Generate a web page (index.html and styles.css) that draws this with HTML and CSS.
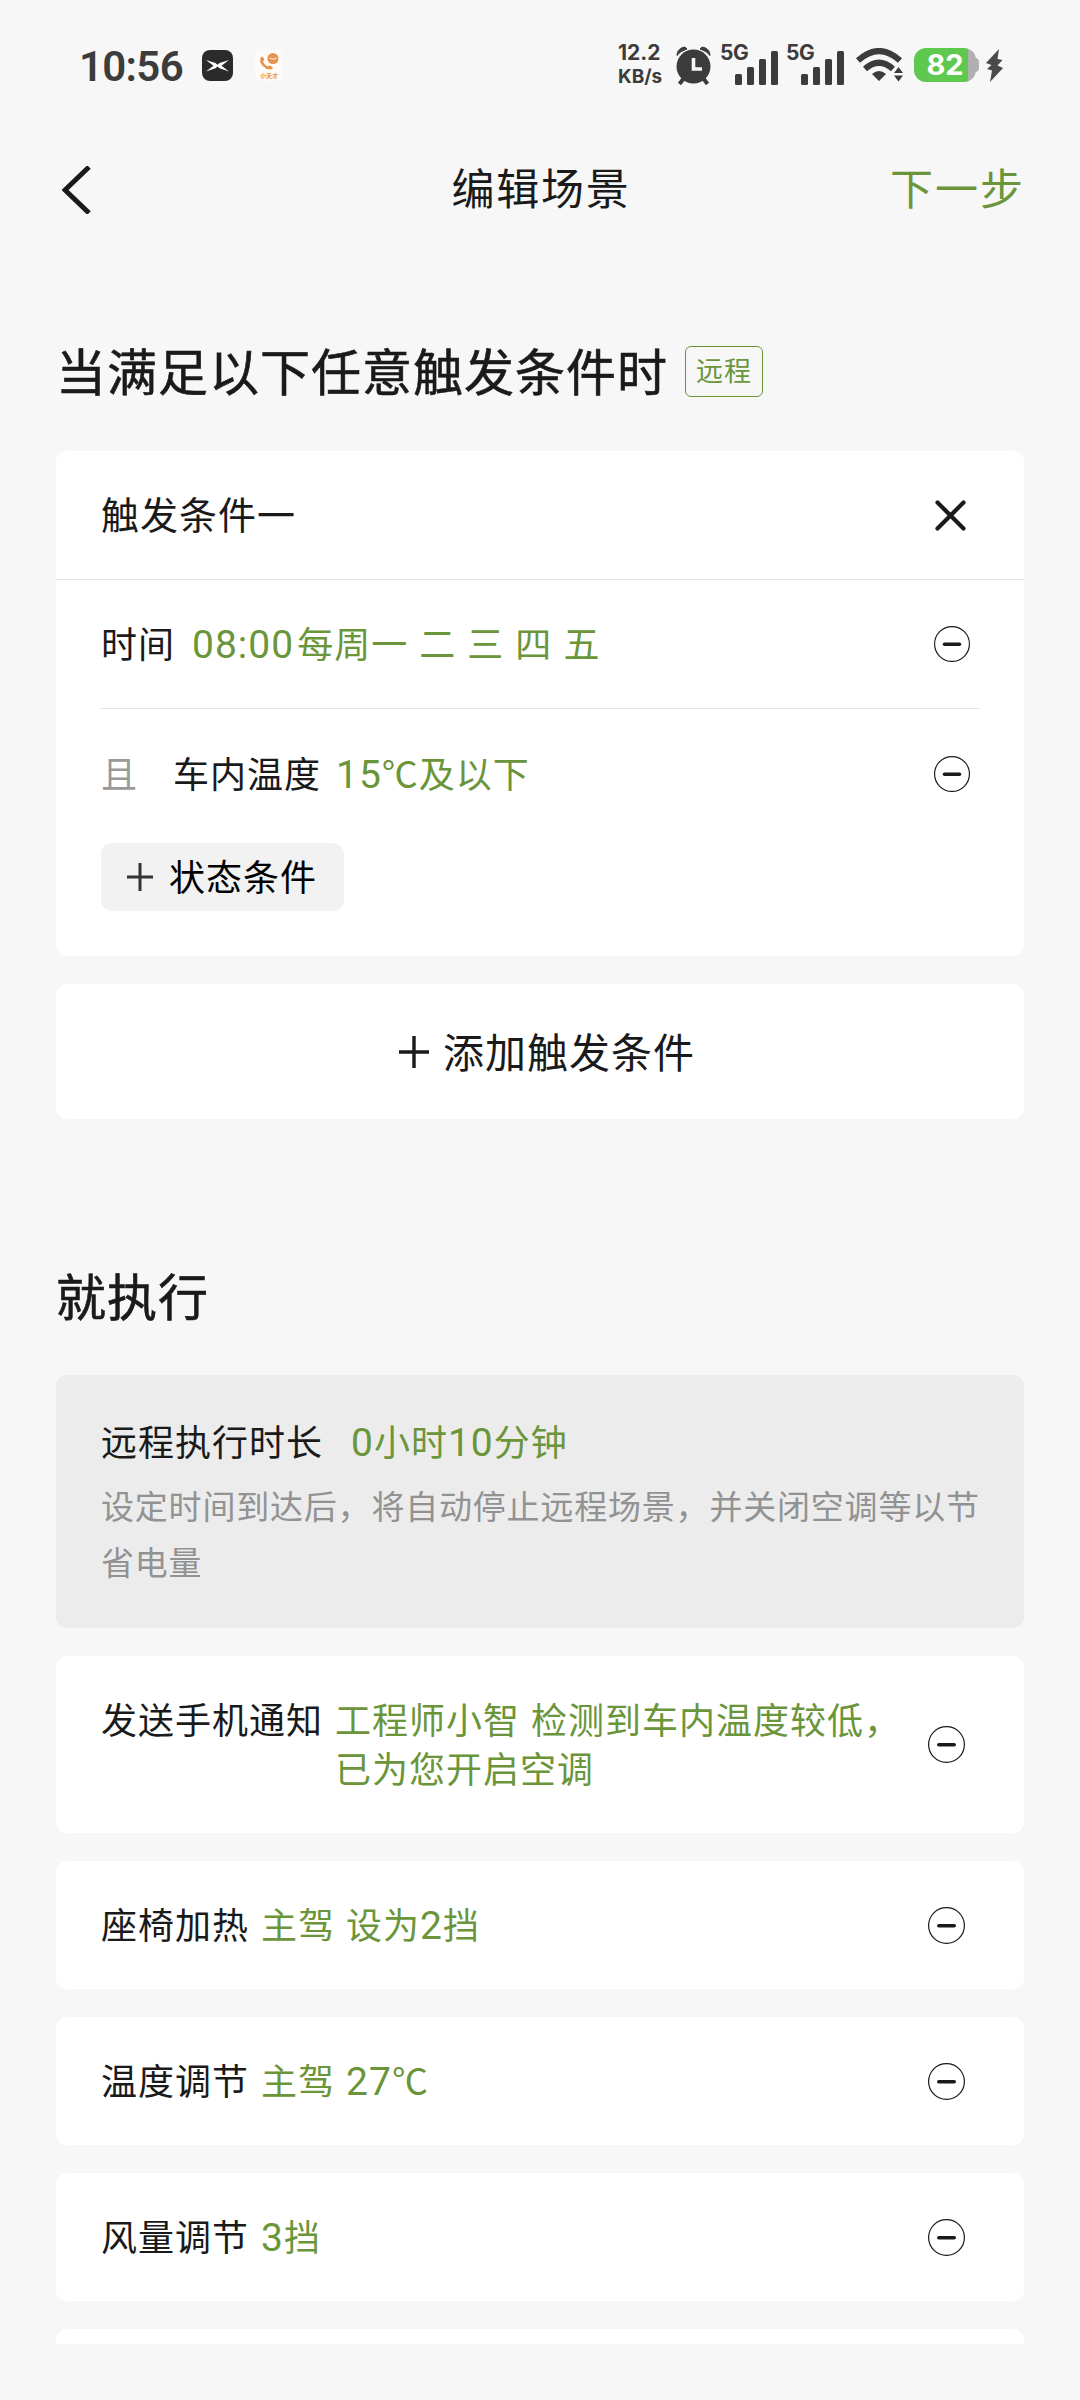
FILE: index.html
```html
<!DOCTYPE html>
<html lang="zh-CN">
    <head>
        <meta charset="utf-8">
        <meta name="viewport" content="width=device-width, initial-scale=1">
        <title>编辑场景</title>
        <link rel="stylesheet" href="styles.css">
    </head>
    <body>
        <!-- shared icons -->
        <svg class="sprite">
            <symbol id="minus" viewBox="0 0 37 37">
                <circle cx="18.5" cy="18.5" r="17.9" fill="none" stroke="#1a1a1a" stroke-width="1.2"/>
                <path d="M10.8 18.7h15.4" stroke="#1a1a1a" stroke-width="3.6" stroke-linecap="round"/>
            </symbol>
            <symbol id="signal" viewBox="0 0 43 34">
                <rect x="0" y="23" width="7" height="11" rx="1.5"/>
                <rect x="12" y="16" width="7" height="18" rx="1.5"/>
                <rect x="24" y="8" width="7" height="26" rx="1.5"/>
                <rect x="36" y="0" width="7" height="34" rx="1.5"/>
            </symbol>
        </svg>

        <div class="statusbar">
            <span class="time">10:56</span>
            <svg class="app-dark" width="31" height="31" viewBox="0 0 31 31">
                <rect width="31" height="31" rx="8" fill="#2b2b2b"/>
                <path d="M4 10L13.5 13L15.500 14.800L17.5 13L27 10L19.500 15.800L27 21.500L17.5 18.300L15.500 16.500L13.5 18.300L4 21.500L11.500 15.800Z" fill="#fff"/>
            </svg>
            <svg class="app-light" width="28" height="31" viewBox="0 0 28 31">
                <rect width="28" height="31" rx="7" fill="#fdfbf9"/>
                <circle cx="18" cy="8.500" r="5.500" fill="#e8924a"/>
                <path d="M14.500 8q3.500 2.500 7 0" stroke="#fdfbf9" stroke-width="1" fill="none"/>
                <path d="M6 7q-2.500 5 2 9q4 4.500 9 3q2-1-1-3q-2-1-3 .5q-4-1.500-5-5.500q2-1 .5-3q-1-2-2.500-1z" fill="#e8924a"/>
                <text class="app-text" x="14" y="27.500" text-anchor="middle">小天才</text>
            </svg>

            <div class="speed"><span>12.2</span><span class="unit">KB/s</span></div>
            <svg class="alarm" width="35" height="39" viewBox="0 0 35 39" fill="#3c3c3c">
                <path d="M1 8.500Q2 2 9 1L11 3Q4 5 1 9.500zM34 8.500Q33 2 26 1L24 3Q31 5 34 9.500z" stroke="#3c3c3c"/>
                <path d="M8 32L3.500 38M27 32L31.500 38" stroke="#3c3c3c" stroke-width="4"/>
                <circle cx="17.500" cy="20.500" r="17"/>
                <path d="M17.500 12v11h8.500" fill="none" stroke="#f7f7f7" stroke-width="3.600"/>
            </svg>
            <div class="net"><span>5G</span><svg width="43" height="34"><use href="#signal"/></svg></div>
            <div class="net"><span>5G</span><svg width="43" height="34"><use href="#signal"/></svg></div>
            <svg class="wifi" width="48" height="34" viewBox="0 0 48 34">
                <g fill="none" stroke="#3c3c3c" stroke-width="6">
                    <path d="M2 12.500Q23 -6.500 44 12.500"/>
                    <path d="M9 21Q23 8.500 37 21"/>
                </g>
                <path d="M16 26q7-6 14 0l-7 7zM38 25l4.500-6l4.500 6zM38 27.500h9l-4.500 6z" fill="#3c3c3c"/>
            </svg>
            <div class="battery">82</div>
            <svg class="bolt" width="17" height="33" viewBox="0 0 17 33">
                <path d="M13 0L0 14L5.500 16L1 20L6 21.500L4 33L17 19L11.500 16.500L16.500 11L11.500 10Z" fill="#4a4a4a"/>
            </svg>
        </div>

        <header>
            <svg class="back" width="30" height="48" viewBox="0 0 30 48">
                <path d="M27 1L3 24L27 47" fill="none" stroke="#1a1a1a" stroke-width="5"/>
            </svg>
            <h1>编辑场景</h1>
            <a class="next">下一步</a>
        </header>

        <main>
            <h2>当满足以下任意触发条件时<span class="tag">远程</span></h2>

            <section class="card trigger">
                <div class="trigger-head">
                    <h3>触发条件一</h3>
                    <svg width="31" height="31" viewBox="0 0 31 31">
                        <path d="M2.500 2.500L28.500 28.500M28.500 2.500L2.500 28.500" stroke="#1a1a1a" stroke-width="4.200" stroke-linecap="round"/>
                    </svg>
                </div>
                <div class="cond line">
                    <span>时间</span>
                    <span class="value week"><span class="num">08:00</span>每周一 二 三 四 五</span>
                    <svg class="remove"><use href="#minus"/></svg>
                </div>
                <div class="cond">
                    <span class="and">且</span>
                    <span>车内温度</span>
                    <span class="value temp"><span class="num">15</span>℃及以下</span>
                    <svg class="remove"><use href="#minus"/></svg>
                </div>
                <button class="state-btn">
                    <svg width="26" height="28" viewBox="0 0 26 28"><path d="M0 14h26M13 0v28" stroke="#333" stroke-width="3"/></svg>
                    <span>状态条件</span>
                </button>
            </section>

            <button class="card add-btn">
                <svg width="30" height="32" viewBox="0 0 30 32"><path d="M0 16h30M15 0v32" stroke="#1a1a1a" stroke-width="3.400"/></svg>
                <span>添加触发条件</span>
            </button>

            <h2 class="do">就执行</h2>

            <div class="duration">
                <p class="dur-title">远程执行时长<span class="value"><span class="num">0</span>小时<span class="num">10</span>分钟</span></p>
                <p class="dur-desc">设定时间到达后，将自动停止远程场景，并关闭空调等以节省电量</p>
            </div>

            <div class="card action notify">
                <span>发送手机通知</span>
                <span class="value">工程师小智 检测到车内温度较低，<br>已为您开启空调</span>
                <svg class="remove"><use href="#minus"/></svg>
            </div>
            <div class="card action">
                <span>座椅加热</span>
                <span class="value">主驾 设为<span class="num">2</span>挡</span>
                <svg class="remove"><use href="#minus"/></svg>
            </div>
            <div class="card action">
                <span>温度调节</span>
                <span class="value">主驾 <span class="num">27</span>℃</span>
                <svg class="remove"><use href="#minus"/></svg>
            </div>
            <div class="card action">
                <span>风量调节</span>
                <span class="value"><span class="num">3</span>挡</span>
                <svg class="remove"><use href="#minus"/></svg>
            </div>
            <div class="card action"></div>
        </main>
    </body>
</html>
```

FILE: styles.css
```css
*{
    box-sizing: border-box;
    margin: 0;
    padding: 0;
}
body{
    width: 1080px;
    height: 2400px;
    overflow: hidden;
    background: #f7f7f7;
    color: #1a1a1a;
    font-family: "Noto Sans CJK SC", sans-serif;
    font-size: 36px;
    letter-spacing: 1px;
}
svg{
    display: block;
    flex-shrink: 0;
}
button{
    border: none;
    font: inherit;
    letter-spacing: inherit;
    color: inherit;
}
.sprite{
    display: none;
}

/* status bar */
.statusbar{
    display: flex;
    align-items: center;
    height: 130px;
    padding: 0 77px 0 79px;
    color: #3c3c3c;
    font-family: Inter, sans-serif;
    font-weight: 700;
    letter-spacing: 0;
}
.time{
    width: 123px;
    padding-top: 2px;
    font-family: Roboto, sans-serif;
    font-size: 42px;
    font-weight: 600;
    letter-spacing: -0.7px;
}
.app-dark{
    margin-right: 22px;
}
.app-text{
    font-family: "Noto Sans CJK SC", sans-serif;
    font-size: 6px;
    fill: #e8924a;
}
.speed{
    display: flex;
    flex-direction: column;
    width: 46px;
    margin-left: auto;
    margin-right: 12px;
    font-size: 21px;
    line-height: 24px;
}
.unit{
    font-size: 19px;
}
.alarm{
    margin-right: 9px;
}
.net{
    display: flex;
    width: 58px;
    height: 39px;
    margin-right: 8px;
    align-items: flex-end;
    font-size: 21px;
    fill: #3c3c3c;
}
.net span{
    width: 15px;
    align-self: flex-start;
    line-height: 14px;
    letter-spacing: -0.5px;
    white-space: nowrap;
}
.wifi{
    margin-left: 4px;
    margin-right: 10px;
}
.battery{
    position: relative;
    width: 62px;
    height: 34px;
    margin-right: 10px;
    border-radius: 12px;
    background: linear-gradient(to right, #5fc94f 54px, #b0b0b0 54px);
    color: #fff;
    font-size: 29px;
    line-height: 34px;
    text-align: center;
}
.battery::after{
    content: "";
    position: absolute;
    top: 10px;
    right: -3px;
    width: 5px;
    height: 14px;
    border-radius: 0 4px 4px 0;
    background: #b0b0b0;
}

/* header */
header{
    display: flex;
    align-items: center;
    justify-content: space-between;
    height: 120px;
    padding: 0 55px 0 62px;
}
h1{
    margin-left: 100px;
    padding-bottom: 9px;
    font-size: 43px;
    font-weight: 400;
    letter-spacing: 1.7px;
}
.next{
    padding-bottom: 9px;
    color: #6a953a;
    font-size: 43px;
    letter-spacing: 2px;
}

main{
    height: 2094px;
    padding: 70px 56px 0;
    overflow: hidden;
}
h2{
    display: flex;
    align-items: center;
    height: 104px;
    padding-bottom: 7px;
    font-size: 50px;
    font-weight: 400;
    -webkit-text-stroke: 0.6px #1a1a1a;
}
.tag{
    height: 51px;
    margin-top: 5px;
    margin-left: 17px;
    padding: 0 10px;
    border: 1px solid #6a953a;
    border-radius: 6px;
    color: #6a953a;
    font-size: 27px;
    line-height: 46px;
    -webkit-text-stroke: 0;
}
.card{
    border-radius: 11px;
    background: #fff;
}
.value{
    color: #6a953a;
}
.num{
    font-family: Roboto, sans-serif;
    font-size: 39px;
    line-height: 1;
}
.remove{
    width: 37px;
    height: 37px;
    margin-left: auto;
}

.trigger{
    height: 505px;
    margin-top: 27px;
}
.trigger-head{
    display: flex;
    align-items: center;
    justify-content: space-between;
    height: 129px;
    padding: 0 58px 0 45px;
    border-bottom: 1px solid #e6e6e6;
}
h3{
    padding-bottom: 6px;
    font-size: 38px;
    font-weight: 400;
}
.cond{
    display: flex;
    align-items: center;
    height: 129px;
    margin: 0 45px;
    padding: 0 9px 0 0;
}
.cond span,
.action > span{
    padding-bottom: 4px;
}
.cond .value{
    margin-left: 17px;
}
.cond .temp{
    margin-left: 15px;
}
.cond .num,
.action .num{
    padding-bottom: 0;
}
.line{
    border-bottom: 1px solid #e6e6e6;
}
.cond .remove{
    width: 36px;
    height: 36px;
}
.week{
    word-spacing: 2px;
}
.week .num{
    margin-right: 3px;
}
.and{
    width: 72px;
    color: #999;
}
.state-btn{
    display: flex;
    align-items: center;
    gap: 16px;
    width: 243px;
    height: 68px;
    margin: 5px 0 0 45px;
    padding: 0 0 0 26px;
    border-radius: 11px;
    background: #f2f2f2;
    color: #000;
}
.state-btn span,
.add-btn span{
    padding-bottom: 4px;
}
.add-btn{
    display: flex;
    align-items: center;
    justify-content: center;
    gap: 14px;
    width: 100%;
    height: 135px;
    margin-top: 28px;
    padding-left: 14px;
    font-size: 41px;
}

.do{
    margin-top: 126px;
}
.duration{
    height: 253px;
    margin-top: 26px;
    padding: 37px 40px 0 45px;
    border-radius: 11px;
    background: #ececec;
}
.dur-title{
    height: 56px;
    line-height: 56px;
}
.dur-title .value{
    margin-left: 28px;
}
.dur-desc{
    margin-top: 9px;
    color: #929292;
    font-size: 33px;
    line-height: 56px;
    letter-spacing: 0.8px;
}
.action{
    display: flex;
    align-items: center;
    height: 128px;
    margin-top: 28px;
    padding: 0 59px 0 45px;
}
.action .value{
    margin-left: 12px;
    word-spacing: 2px;
}
.notify{
    align-items: flex-start;
    height: 177px;
    padding-top: 38px;
    line-height: 49px;
}
.notify .value{
    margin-right: -20px;
}
.notify .remove{
    align-self: center;
    margin-top: -38px;
}
```
